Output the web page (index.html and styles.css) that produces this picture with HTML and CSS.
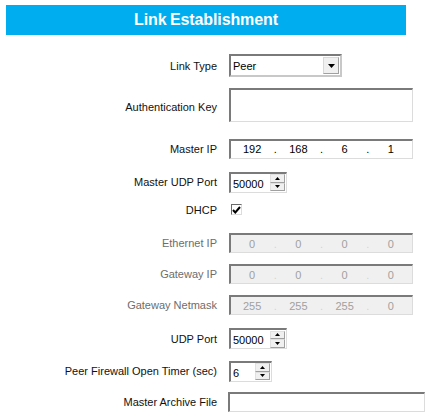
FILE: index.html
```html
<!DOCTYPE html>
<html>
<head>
<meta charset="utf-8">
<link rel="stylesheet" href="styles.css">
</head>
<body>
<div class="header">Link Establishment</div>
<div class="form">
  <div class="label">Link Type</div>
  <div class="ctl">
    <div class="select"><span class="sel-val">Peer</span><span class="sel-btn"><svg width="7" height="4" viewBox="0 0 7 4"><path d="M0 0H7L3.5 4Z" fill="#000"/></svg></span></div>
  </div>

  <div class="label label-auth">Authentication Key</div>
  <div class="ctl"><div class="field textarea"></div></div>

  <div class="label">Master IP</div>
  <div class="ctl">
    <div class="field ip"><span class="seg">192</span><span class="dot">.</span><span class="seg">168</span><span class="dot">.</span><span class="seg">6</span><span class="dot">.</span><span class="seg">1</span></div>
  </div>

  <div class="label">Master UDP Port</div>
  <div class="ctl">
    <div class="field spin spin-wide"><span class="spin-val">50000</span><span class="btns"><span class="btn"><svg width="5" height="3" viewBox="0 0 5 3"><path d="M2.5 0L5 3H0Z" fill="#000"/></svg></span><span class="btn"><svg width="5" height="3" viewBox="0 0 5 3"><path d="M0 0H5L2.5 3Z" fill="#000"/></svg></span></span></div>
  </div>

  <div class="label">DHCP</div>
  <div class="ctl ctl-check">
    <div class="check"><svg width="9" height="8" viewBox="0 0 9 8"><path d="M1 4L3.3 6.5L8 1" fill="none" stroke="#000" stroke-width="2"/></svg></div>
  </div>

  <div class="label dis">Ethernet IP</div>
  <div class="ctl">
    <div class="field ip ip-dis"><span class="seg">0</span><span class="dot">.</span><span class="seg">0</span><span class="dot">.</span><span class="seg">0</span><span class="dot">.</span><span class="seg">0</span></div>
  </div>

  <div class="label dis">Gateway IP</div>
  <div class="ctl">
    <div class="field ip ip-dis"><span class="seg">0</span><span class="dot">.</span><span class="seg">0</span><span class="dot">.</span><span class="seg">0</span><span class="dot">.</span><span class="seg">0</span></div>
  </div>

  <div class="label dis">Gateway Netmask</div>
  <div class="ctl">
    <div class="field ip ip-dis"><span class="seg">255</span><span class="dot">.</span><span class="seg">255</span><span class="dot">.</span><span class="seg">255</span><span class="dot">.</span><span class="seg">0</span></div>
  </div>

  <div class="label">UDP Port</div>
  <div class="ctl">
    <div class="field spin spin-wide"><span class="spin-val">50000</span><span class="btns"><span class="btn"><svg width="5" height="3" viewBox="0 0 5 3"><path d="M2.5 0L5 3H0Z" fill="#000"/></svg></span><span class="btn"><svg width="5" height="3" viewBox="0 0 5 3"><path d="M0 0H5L2.5 3Z" fill="#000"/></svg></span></span></div>
  </div>

  <div class="label">Peer Firewall Open Timer (sec)</div>
  <div class="ctl">
    <div class="field spin spin-narrow"><span class="spin-val">6</span><span class="btns"><span class="btn"><svg width="5" height="3" viewBox="0 0 5 3"><path d="M2.5 0L5 3H0Z" fill="#000"/></svg></span><span class="btn"><svg width="5" height="3" viewBox="0 0 5 3"><path d="M0 0H5L2.5 3Z" fill="#000"/></svg></span></span></div>
  </div>

  <div class="label">Master Archive File</div>
  <div class="ctl"><div class="field archive"></div></div>
</div>
</body>
</html>
```
FILE: styles.css
```css
html, body {
  margin: 0;
  padding: 0;
  background: #fff;
}
body {
  font-family: "Liberation Sans", Arial, sans-serif;
  font-size: 11px;
  color: #000;
  width: 433px;
  height: 418px;
  overflow: hidden;
}
.header {
  margin: 5px 0 0 6px;
  width: 400px;
  height: 30px;
  background: #00adef;
  color: #fff;
  font-weight: bold;
  font-size: 16px;
  letter-spacing: -0.1px;
  word-spacing: -1px;
  display: flex;
  align-items: center;
  justify-content: center;
  box-sizing: border-box;
  padding-bottom: 1px;
}
.form {
  margin-top: 11px;
  display: grid;
  grid-template-columns: 217px auto;
  column-gap: 12px;
  grid-template-rows: 39px 40px 47px 20px 35px 32px 30px 32px 35px 30px 31px;
  align-items: center;
}
.label {
  text-align: right;
  white-space: nowrap;
  color: #111;
}
.label-auth {
  padding-top: 4px;
}
.label.dis {
  color: #6d6d6d;
}
.ctl {
  display: flex;
  align-items: center;
}
.field {
  box-sizing: border-box;
  background: #fff;
  border-style: solid;
  border-width: 2px 1px 1px 2px;
  border-color: #7a7a7a #dcdcdc #dcdcdc #7a7a7a;
}
.select {
  box-sizing: border-box;
  width: 113px;
  height: 23px;
  background: #fff;
  border-style: solid;
  border-width: 2px 2px 2px 2px;
  border-color: #7a7a7a #c8c8c8 #c8c8c8 #7a7a7a;
  display: flex;
  align-items: center;
  padding: 0 1px 0 2px;
}
.sel-val {
  flex: 1;
}
.sel-btn {
  width: 16px;
  height: 17px;
  box-sizing: border-box;
  background: #f0f0f0;
  border: 1px solid #d8d8d8;
  border-right-color: #a0a0a0;
  border-bottom-color: #a0a0a0;
  display: flex;
  align-items: center;
  justify-content: center;
}
.textarea {
  width: 184px;
  height: 34px;
}
.ip {
  width: 184px;
  height: 20px;
  display: flex;
  align-items: center;
  padding: 0 1px;
}
.seg {
  flex: 1;
  text-align: center;
}
.dot {
  width: 6px;
  text-align: center;
}
.ip-dis {
  background: #f0f0f0;
  color: #a0a0a0;
}
.ip-dis .dot {
  color: #d4d4d4;
}
.spin {
  height: 21px;
  display: flex;
  align-items: center;
  padding: 0 1px 0 2px;
}
.spin-wide {
  width: 58px;
}
.spin-narrow {
  width: 43px;
}
.spin-val {
  flex: 1;
  padding-top: 2px;
}
.btns {
  width: 15px;
  height: 17px;
  display: flex;
  flex-direction: column;
}
.btn {
  flex: 1;
  box-sizing: border-box;
  background: #f0f0f0;
  border: 1px solid #e0e0e0;
  border-right-color: #a0a0a0;
  border-bottom-color: #a0a0a0;
  display: flex;
  align-items: center;
  justify-content: center;
}
.ctl-check {
  padding-left: 2px;
}
.check {
  box-sizing: border-box;
  width: 11px;
  height: 11px;
  background: #fff;
  border-style: solid;
  border-width: 1px;
  border-color: #6a6a6a #dcdcdc #dcdcdc #6a6a6a;
  display: flex;
  align-items: center;
  justify-content: center;
}
.archive {
  margin-left: -1px;
  width: 197px;
  height: 20px;
}
```
